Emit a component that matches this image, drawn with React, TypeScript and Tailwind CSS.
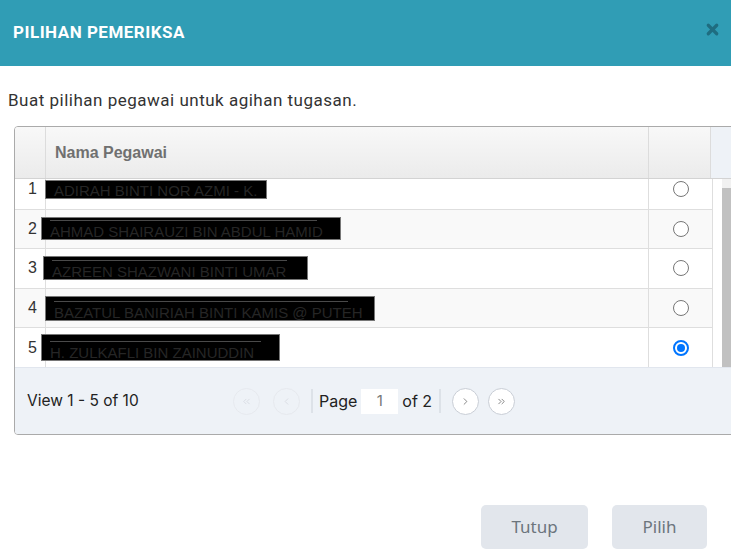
import { X, ChevronLeft, ChevronRight, ChevronsLeft, ChevronsRight } from "lucide-react";

const ROWS = [
  { no: 1, name: "ADIRAH BINTI NOR AZMI - K.", box: "w-[222px] h-[19px] -ml-[1px]", bar: false },
  { no: 2, name: "AHMAD SHAIRAUZI BIN ABDUL HAMID", box: "w-[300px] h-[23px] -ml-[5px]", bar: true },
  { no: 3, name: "AZREEN SHAZWANI BINTI UMAR", box: "w-[265px] h-[24px] -ml-[3px]", bar: true },
  { no: 4, name: "BAZATUL BANIRIAH BINTI KAMIS @ PUTEH", box: "w-[330px] h-[25px] -ml-[1px]", bar: true },
  { no: 5, name: "H. ZULKAFLI BIN ZAINUDDIN", box: "w-[239px] h-[27px] -ml-[5px]", bar: true },
];

const SELECTED = 5;

function Radio({ checked }: { checked: boolean }) {
  if (checked) {
    return (
      <span className="w-[16px] h-[16px] rounded-full border-2 border-[#0075ff] flex items-center justify-center bg-white">
        <span className="w-[8px] h-[8px] rounded-full bg-[#0075ff]" />
      </span>
    );
  }
  return <span className="w-[16px] h-[16px] rounded-full border border-[#767676] bg-white" />;
}

function PagerBtn({ children, disabled }: { children: React.ReactNode; disabled?: boolean }) {
  return (
    <span
      className={`w-[27px] h-[27px] rounded-full border flex items-center justify-center ${
        disabled ? "border-[#e6e9ee] text-[#d0d4da]" : "border-[#c9ced6] bg-white text-[#555]"
      }`}
    >
      {children}
    </span>
  );
}

export default function App() {
  return (
    <div className="w-[731px] h-[555px] bg-white overflow-hidden flex flex-col font-['Roboto',sans-serif]">
      {/* Modal header */}
      <div className="h-[66px] shrink-0 bg-[#309db5] flex items-center justify-between pl-[13px] pr-[10px]">
        <h2 className="text-white font-bold text-[17px] tracking-[0.5px]">PILIHAN PEMERIKSA</h2>
        <X className="h-[17px] w-[17px] text-[#1f6d80] -mt-[8px]" strokeWidth={4.5} />
      </div>

      <p className="mt-[24px] ml-[8px] text-[17px] tracking-[0.5px] text-[#333] leading-[20px]">
        Buat pilihan pegawai untuk agihan tugasan.
      </p>

      {/* Grid */}
      <div className="mt-[16px] ml-[14px] w-[740px] h-[309px] shrink-0 border border-[#aaa] rounded-[4px] overflow-hidden flex flex-col font-['Inter',sans-serif]">
        <div className="h-[52px] shrink-0 flex bg-gradient-to-b from-[#f8f8f8] to-[#ebebeb] border-b border-[#d3d3d3]">
          <div className="w-[31px] border-r border-[#dcdcdc]" />
          <div className="w-[603px] border-r border-[#dcdcdc] flex items-center pl-[9px] text-[16px] font-bold text-[#707070] font-['Liberation_Sans',sans-serif]">
            Nama Pegawai
          </div>
          <div className="w-[62px] border-r border-[#dcdcdc]" />
          <div className="flex-1 bg-[#eef2f7]" />
        </div>

        <div className="h-[188px] shrink-0 flex overflow-hidden">
          <div className="w-[697px] overflow-hidden">
            <div className="-mt-[9px]">
              {ROWS.map((r, i) => (
                <div
                  key={r.no}
                  className={`h-[39.6px] flex border-b border-[#dedede] ${i % 2 === 1 ? "bg-[#f9f9f9]" : "bg-white"}`}
                >
                  <div className="w-[31px] border-r border-[#dedede] flex items-center justify-end pr-[8px] text-[16px] text-[#333] font-['Liberation_Sans',sans-serif]">
                    {r.no}
                  </div>
                  <div className="w-[603px] border-r border-[#dedede] flex items-center">
                    <div
                      className={`${r.box} bg-black border border-[#777] flex flex-col justify-end overflow-hidden pl-[8px]`}
                    >
                      {r.bar && <div className="h-[1px] w-[92%] bg-[#4a4a4a] mb-[3px]" />}
                      <span className="text-[15px] leading-[15px] text-[#262626] whitespace-nowrap font-['Liberation_Sans',sans-serif]">
                        {r.name}
                      </span>
                    </div>
                  </div>
                  <div className="w-[62px] flex items-center justify-center pl-[2px]">
                    <Radio checked={r.no === SELECTED} />
                  </div>
                </div>
              ))}
            </div>
          </div>
          {/* scrollbar */}
          <div className="w-[10px] border-l border-[#dedede] bg-white" />
          <div className="w-[10px] flex flex-col bg-[#f1f1f1]">
            <div className="h-[9px]" />
            <div className="flex-1 bg-[#c1c1c1]" />
          </div>
          <div className="flex-1 bg-[#f1f1f1]" />
        </div>

        {/* Pager */}
        <div className="flex-1 bg-[#eef2f7] border-t border-[#e1e6ee] flex items-center text-[15px] text-[#222]">
          <span className="ml-[12px] w-[206px] text-[15.5px]">View 1 - 5 of 10</span>
          <div className="flex items-center">
            <PagerBtn disabled>
              <ChevronsLeft className="w-[11px] h-[11px]" strokeWidth={1.5} />
            </PagerBtn>
            <span className="w-[13px]" />
            <PagerBtn disabled>
              <ChevronLeft className="w-[11px] h-[11px]" strokeWidth={1.5} />
            </PagerBtn>
            <span className="ml-[11px] w-[2px] h-[24px] bg-[#dde2e8]" />
            <span className="ml-[6px] text-[16px]">Page</span>
            <span className="ml-[4px] w-[37px] h-[25px] bg-white flex items-center justify-center text-[#777]">1</span>
            <span className="ml-[4px] text-[16px]">of 2</span>
            <span className="ml-[7px] w-[2px] h-[24px] bg-[#dde2e8]" />
            <span className="w-[11px]" />
            <PagerBtn>
              <ChevronRight className="w-[11px] h-[11px]" strokeWidth={1.5} />
            </PagerBtn>
            <span className="w-[9px]" />
            <PagerBtn>
              <ChevronsRight className="w-[11px] h-[11px]" strokeWidth={1.5} />
            </PagerBtn>
          </div>
        </div>
      </div>

      {/* Footer buttons */}
      <div className="mt-[70px] flex justify-end gap-[24px] pr-[24px] font-['Noto_Sans',sans-serif]">
        <button className="w-[107px] h-[44px] rounded-[5px] bg-[#e2e6ec] text-[#6c757d] text-[17px] ml-[2px]">Tutup</button>
        <button className="w-[95px] h-[44px] rounded-[5px] bg-[#e2e6ec] text-[#6c757d] text-[17px]">Pilih</button>
      </div>
    </div>
  );
}
